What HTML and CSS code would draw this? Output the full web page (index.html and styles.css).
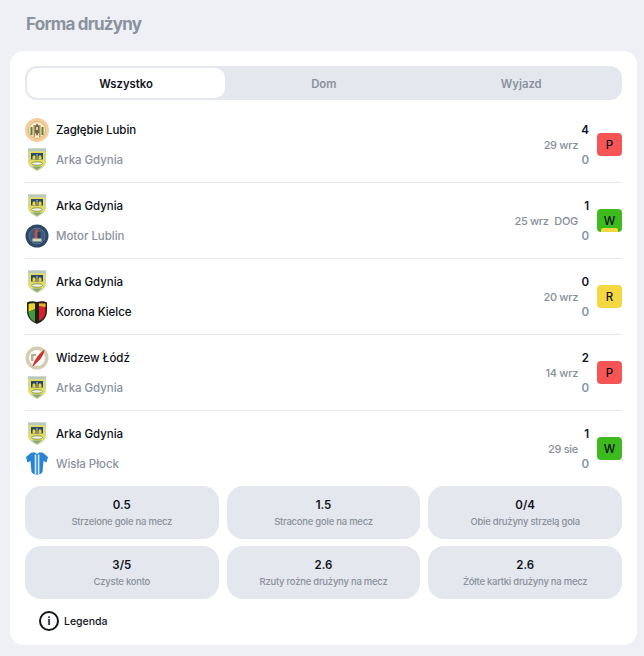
FILE: index.html
```html
<!DOCTYPE html>
<html lang="pl">
<head>
<meta charset="utf-8">
<title>Forma drużyny</title>
<link rel="stylesheet" href="styles.css">
</head>
<body>
<svg class="defs" width="0" height="0" aria-hidden="true">
  <symbol id="arka" viewBox="0 0 24 24">
    <path d="M3 .500h18v13c0 4.500-4.500 7.500-9 9.500-4.500-2-9-5-9-9.500z" fill="#cdd8a8"/>
    <path d="M3 .500h18v2.500H3z" fill="#b8c8bc"/>
    <path d="M4.500 3.500h15v10.500H4.500z" fill="#e2dc58"/>
    <rect x="6" y="5" width="12" height="6.500" fill="#2c4670"/>
    <path d="M7.500 11.500V8.500l1.500-1.500 1.500 1.500v3zM13.500 11.500V8.500L15 7l1.500 1.500v3z" fill="#e8d83e"/>
    <rect x="11" y="6" width="2" height="5.500" fill="#7f8f70"/>
    <path d="M4 14h16c-.2 1.700-1 3-2 4H6c-1-1-1.800-2.300-2-4z" fill="#e6e04a"/>
    <ellipse cx="12" cy="15.500" rx="5.500" ry="1.700" fill="#f7f7e6" stroke="#47683f" stroke-width=".6"/>
    <path d="M7 18.500h10l-5 3.500z" fill="#8aa868"/>
  </symbol>
  <symbol id="zaglebie" viewBox="0 0 24 24">
    <circle cx="12" cy="12" r="12" fill="#f3cf9e"/>
    <circle cx="12" cy="12" r="8.500" fill="#f8ecd2" stroke="#dfa55c" stroke-width=".8"/>
    <path d="M5.500 9h2v8h-2zM16.500 9h2v8h-2z" fill="#4f8a3c"/>
    <path d="M8.500 7h1.500v12H8.500zM14 7h1.500v12H14z" fill="#c98a3a"/>
    <path d="M12 5.500l2 2.500v6.500L12 18l-2-3.500V8z" fill="#6a675a"/>
    <path d="M11 9h2v3h-2z" fill="#d8d4c0"/>
  </symbol>
  <symbol id="motor" viewBox="0 0 24 24">
    <circle cx="12" cy="12" r="11.500" fill="#2c4766"/>
    <circle cx="12" cy="12" r="8" fill="#3d5a7a" stroke="#7089a3" stroke-width=".6"/>
    <path d="M10 5.500h3l1.500 9h-5z" fill="#c4523e"/>
    <path d="M12.500 8h3v7h-3z" fill="#24406f"/>
    <path d="M7.500 14.500h9v3h-9z" fill="#d8d4b8"/>
  </symbol>
  <symbol id="korona" viewBox="0 0 24 24">
    <path d="M2 2.500C5 1 8 1 12 2c4-1 7-1 10 .500V11c0 7-4.500 10.500-10 13C6.500 21.500 2 18 2 11z" fill="#1f2118"/>
    <path d="M3.500 4c2-1 4-1 6.500-.5V9L3.500 12z" fill="#ecd328"/>
    <path d="M3.500 12L10 9v13c-4-2-6.500-5.500-6.500-10z" fill="#3f9a38"/>
    <path d="M14 3.500c2.500-.500 4.500-.5 6.500.5v7.500c0 4.500-2.500 7.500-6.500 9.500z" fill="#d8202a"/>
    <path d="M14 3.500h6.500V7L14 6z" fill="#e8b524"/>
    <path d="M10 7h4l-.5 10-1.500 4-1.500-4z" fill="#1f2118"/>
  </symbol>
  <symbol id="widzew" viewBox="0 0 24 24">
    <circle cx="12" cy="12" r="11.500" fill="#d5ccb4"/>
    <circle cx="12" cy="12" r="8" fill="#fff"/>
    <path d="M19.500 3.500c-.5 5-3.500 10-8 13.500L7.500 21c.5-4.500 5-12.500 12-17.500z" fill="#d2332c"/>
    <path d="M6 8h5v2H8.500v5H6z" fill="#b8ad90"/>
  </symbol>
  <symbol id="wisla" viewBox="0 0 24 24">
    <path d="M6.500 .500H10L12 2l2-1.500h3.500L23 5l-1.500 5.500L18.500 9l-1 11c-2 3.500-9 3.500-11 0l-1-11-3 1.500L1 5z" fill="#2684d6"/>
    <path d="M9.700 2.500h1.600v20h-1.600zM12.800 2.500h1.600v20h-1.600z" fill="#dcecf8"/>
  </symbol>
</svg>

<main class="page">
  <h1 class="title">Forma drużyny</h1>
  <section class="card">
    <div class="tabs">
      <div class="tab tab-active">Wszystko</div>
      <div class="tab">Dom</div>
      <div class="tab">Wyjazd</div>
    </div>

    <div class="match">
      <div class="teams">
        <div class="team team-win"><svg class="logo"><use href="#zaglebie"/></svg><span>Zagłębie Lubin</span></div>
        <div class="team"><svg class="logo"><use href="#arka"/></svg><span>Arka Gdynia</span></div>
      </div>
      <div class="date">29 wrz</div>
      <div class="scores"><span class="score-top">4</span><span>0</span></div>
      <div class="badge badge-p">P</div>
    </div>

    <div class="match">
      <div class="teams">
        <div class="team team-win"><svg class="logo"><use href="#arka"/></svg><span>Arka Gdynia</span></div>
        <div class="team"><svg class="logo"><use href="#motor"/></svg><span>Motor Lublin</span></div>
      </div>
      <div class="date">25 wrz <span class="date-extra">DOG</span></div>
      <div class="scores"><span class="score-top">1</span><span>0</span></div>
      <div class="badge badge-w">W<i class="strip"></i></div>
    </div>

    <div class="match">
      <div class="teams">
        <div class="team team-win"><svg class="logo"><use href="#arka"/></svg><span>Arka Gdynia</span></div>
        <div class="team team-win"><svg class="logo"><use href="#korona"/></svg><span>Korona Kielce</span></div>
      </div>
      <div class="date">20 wrz</div>
      <div class="scores"><span class="score-top">0</span><span>0</span></div>
      <div class="badge badge-r">R</div>
    </div>

    <div class="match">
      <div class="teams">
        <div class="team team-win"><svg class="logo"><use href="#widzew"/></svg><span>Widzew Łódź</span></div>
        <div class="team"><svg class="logo"><use href="#arka"/></svg><span>Arka Gdynia</span></div>
      </div>
      <div class="date">14 wrz</div>
      <div class="scores"><span class="score-top">2</span><span>0</span></div>
      <div class="badge badge-p">P</div>
    </div>

    <div class="match match-last">
      <div class="teams">
        <div class="team team-win"><svg class="logo"><use href="#arka"/></svg><span>Arka Gdynia</span></div>
        <div class="team"><svg class="logo"><use href="#wisla"/></svg><span>Wisła Płock</span></div>
      </div>
      <div class="date">29 sie</div>
      <div class="scores"><span class="score-top">1</span><span>0</span></div>
      <div class="badge badge-w">W</div>
    </div>

    <div class="stats">
      <div class="stat"><b>0.5</b><span>Strzelone gole na mecz</span></div>
      <div class="stat"><b>1.5</b><span>Stracone gole na mecz</span></div>
      <div class="stat"><b>0/4</b><span>Obie drużyny strzelą gola</span></div>
      <div class="stat"><b>3/5</b><span>Czyste konto</span></div>
      <div class="stat"><b>2.6</b><span>Rzuty rożne drużyny na mecz</span></div>
      <div class="stat"><b>2.6</b><span>Żółte kartki drużyny na mecz</span></div>
    </div>

    <div class="legend">
      <span class="info">i</span>
      <span class="legend-text">Legenda</span>
    </div>
  </section>
</main>
</body>
</html>
```
FILE: styles.css
```css
* { box-sizing: border-box; }
html, body { margin: 0; padding: 0; }
body {
  background: #eef0f5;
  font-family: Inter, "Noto Sans", sans-serif;
  color: #10141c;
  height: 656px;
  overflow: hidden;
}
.defs { position: absolute; }
.page { padding: 0 7px 0 10px; }
.title {
  margin: 0;
  height: 51px;
  padding: 14px 0 0 16px;
  font-size: 17px;
  line-height: 20px;
  font-weight: 700;
  letter-spacing: -0.75px;
  color: #8a929e;
}
.card {
  background: #fff;
  border-radius: 14px;
  padding: 15px 15px 0;
  height: 594px;
}
.tabs {
  display: flex;
  height: 34px;
  padding: 2px;
  border-radius: 12px;
  background: #e4e7ed;
}
.tab {
  flex: 1;
  display: flex;
  align-items: center;
  justify-content: center;
  padding-top: 1px;
  font-size: 11.300px;
  font-weight: 600;
  color: #8a929e;
  border-radius: 10px;
}
.tab-active { background: #fff; color: #10141c; flex: 0 0 198px; }
.tab + .tab { flex: 1; }
.match {
  display: flex;
  align-items: center;
  height: 76px;
  border-bottom: 1px solid #e4e7ed;
}
.tabs + .match { margin-top: 7px; }
.match-last { border-bottom: 0; height: 75px; }
.teams {
  flex: 1;
  display: flex;
  flex-direction: column;
  gap: 6px;
}
.team {
  display: flex;
  align-items: center;
  gap: 7px;
  font-size: 11.500px;
  line-height: 15px;
  font-weight: 550;
  letter-spacing: -0.05px;
  color: #8a929e;
}
.team span { padding-top: 1px; }
.team-win { color: #0a0e16; }
.logo { width: 24px; height: 24px; display: block; }
.date {
  font-size: 11px;
  font-weight: 500;
  letter-spacing: -0.3px;
  color: #868e9a;
}
.date-extra { margin-left: 3px; }
.scores {
  width: 11px;
  display: flex;
  flex-direction: column;
  align-items: flex-end;
  gap: 15px;
  padding-top: 2px;
  font-size: 11.500px;
  line-height: 15px;
  font-weight: 600;
  color: #7f93ab;
}
.score-top { color: #0a1428; }
.badge {
  position: relative;
  overflow: hidden;
  margin-left: 8px;
  width: 25px;
  height: 23px;
  border-radius: 4px;
  display: flex;
  align-items: center;
  justify-content: center;
  font-size: 11.500px;
  font-weight: 500;
  color: #0a0e16;
}
.badge-p { background: #f55555; }
.badge-w { background: #3dbb1c; }
.badge-r { background: #f5d742; }
.strip {
  position: absolute;
  left: 4px;
  right: 4px;
  bottom: 0;
  height: 4px;
  background: #f5d742;
  border-radius: 2px 2px 0 0;
}
.stats {
  display: grid;
  grid-template-columns: repeat(3, 1fr);
  grid-auto-rows: 53px;
  column-gap: 8px;
  row-gap: 7px;
}
.stat {
  background: #e4e7ed;
  border-radius: 16px;
  display: flex;
  flex-direction: column;
  align-items: center;
  padding-top: 11px;
}
.stat b {
  font-size: 11.500px;
  line-height: 16px;
  font-weight: 600;
  color: #10141c;
}
.stat span {
  font-size: 9.500px;
  line-height: 13px;
  margin-top: 2px;
  font-weight: 500;
  letter-spacing: -0.25px;
  color: #8a929e;
}
.legend {
  display: flex;
  align-items: center;
  gap: 5px;
  padding: 12px 0 0 14px;
}
.info {
  width: 20px;
  height: 20px;
  border: 2px solid #10141c;
  border-radius: 50%;
  display: flex;
  align-items: center;
  justify-content: center;
  font-size: 11px;
  font-weight: 700;
}
.legend-text { font-size: 10.500px; font-weight: 550; color: #10141c; }
```
